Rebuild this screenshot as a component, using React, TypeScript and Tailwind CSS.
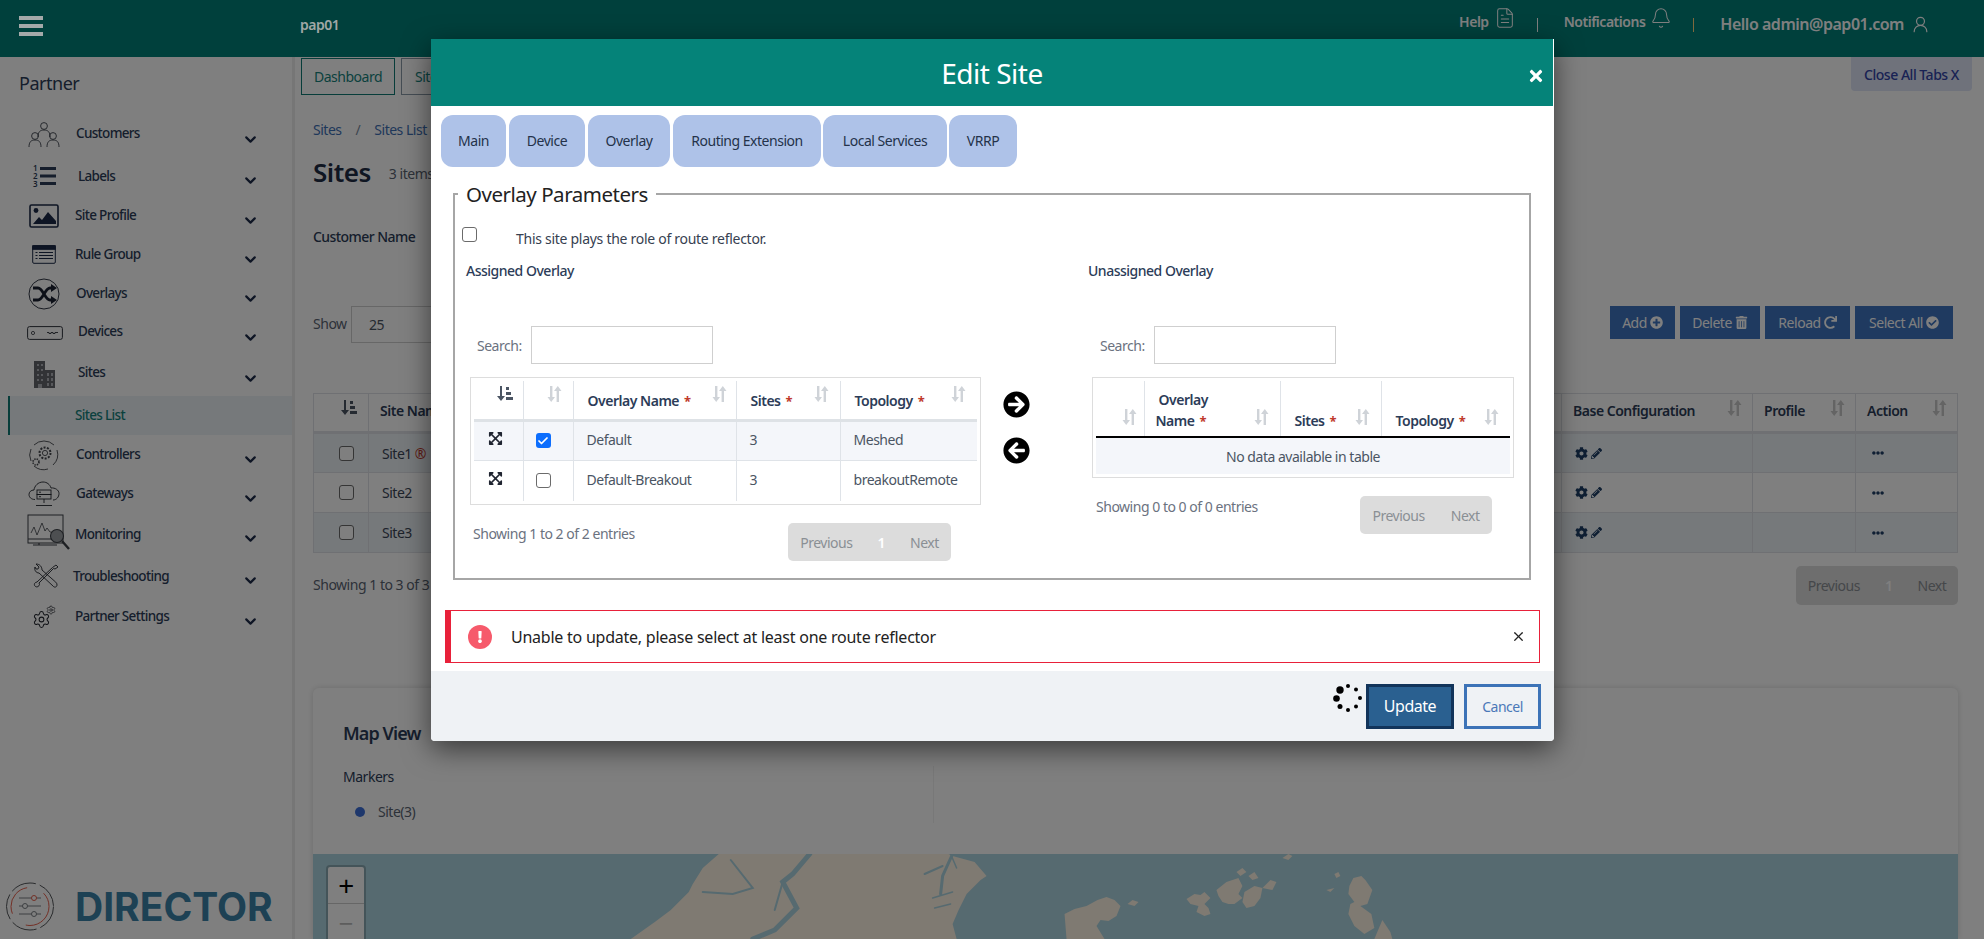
import { Bell, Check, ChevronDown, FileText, Settings, UserRound, X } from "lucide-react";
import {
  FaArrowCircleLeft,
  FaArrowCircleRight,
  FaCheckCircle,
  FaCog,
  FaEllipsisH,
  FaExclamation,
  FaExpandArrowsAlt,
  FaPencilAlt,
  FaPlusCircle,
  FaRedo,
  FaTimes,
  FaTrashAlt,
} from "react-icons/fa";

const ink = "#2c3c58";

function Customers() {
  const person = (x: number, y: number) => (
    <g key={`${x}-${y}`}>
      <circle cx={x} cy={y} r="3.4" />
      <path d={`M${x - 6} ${y + 11}c0-5 2-7 6-7s6 2 6 7`} />
    </g>
  );
  return (
    <svg width="34" height="28" viewBox="0 0 34 28" fill="none" stroke="#3a3f4a" strokeWidth="0.9">
      {person(17, 5)}
      {person(8, 15)}
      {person(26, 15)}
    </svg>
  );
}

function Labels() {
  return (
    <svg width="26" height="26" viewBox="0 0 26 26" fill={ink}>
      <text x="1" y="8" fontSize="8" fontFamily="Noto Sans" fontWeight="600">1</text>
      <text x="1" y="16" fontSize="8" fontFamily="Noto Sans" fontWeight="600">2</text>
      <text x="1" y="24" fontSize="8" fontFamily="Noto Sans" fontWeight="600">3</text>
      <rect x="8" y="4" width="16" height="3" />
      <rect x="8" y="11.5" width="16" height="3" />
      <rect x="8" y="19" width="16" height="3" />
    </svg>
  );
}

function SiteProfile() {
  return (
    <svg width="30" height="24" viewBox="0 0 30 24">
      <rect x="1" y="1" width="28" height="22" rx="1.5" fill="none" stroke="#1c2a48" strokeWidth="1.6" />
      <circle cx="7" cy="6.5" r="2.4" fill="#1c2a48" />
      <path d="M4 20l6-7 3 3 6-8 8 9v3z" fill="#1c2a48" />
    </svg>
  );
}

function RuleGroup() {
  return (
    <svg width="24" height="19" viewBox="0 0 24 19" fill="none" stroke="#1c2a48">
      <rect x="0.7" y="0.7" width="22.6" height="17.6" rx="1.2" />
      <rect x="0.7" y="0.7" width="22.6" height="3.6" fill="#1c2a48" />
      <path d="M3.5 7.5h2M7 7.5h14M3.5 10.5h2M7 10.5h14M3.5 13.5h2M7 13.5h14" />
    </svg>
  );
}

function Overlays() {
  return (
    <svg width="32" height="32" viewBox="0 0 32 32" fill="none" stroke="#1a2030">
      <circle cx="16" cy="16" r="15" strokeWidth="0.9" />
      <path d="M5 10h5c5 0 7 12 12 12h3M5 22h5c5 0 7-12 12-12h3" strokeWidth="2.8" />
      <path d="M23 6l6 4-6 4zM23 18l6 4-6 4z" fill="#1a2030" strokeWidth="0" />
    </svg>
  );
}

function Devices() {
  return (
    <svg width="36" height="14" viewBox="0 0 36 14" fill="none" stroke="#30343c">
      <rect x="0.6" y="0.6" width="34.8" height="12.8" rx="2" />
      <circle cx="6" cy="7" r="1.6" strokeWidth="0.8" />
      <path d="M20 6.5h2v1h2v-1h2v1h2v-1h3" strokeWidth="0.9" />
    </svg>
  );
}

function Sites() {
  return (
    <svg width="26" height="29" viewBox="0 0 26 29" fill="#64676c">
      <path d="M2 28V1h11v9h10v18z" />
      <g fill="#b0b3b8">
        <path d="M5 4h2v2H5zM9 4h2v2H9zM5 9h2v2H5zM9 9h2v2H9zM5 14h2v2H5zM9 14h2v2H9zM5 19h2v2H5zM9 19h2v2H9zM15 13h2v3h-2zM19 13h2v3h-2zM15 18h2v3h-2zM19 18h2v3h-2zM15 23h2v3h-2zM19 23h2v3h-2zM6 24h4v4H6z" />
      </g>
    </svg>
  );
}

function Controllers() {
  return (
    <svg width="32" height="32" viewBox="0 0 32 32" fill="none" stroke="#43464c">
      <path d="M6 6a14.5 14.5 0 0 1 20 0M29 11a14.5 14.5 0 0 1-4 15M20 30a14.5 14.5 0 0 1-14-3M3 22a14.5 14.5 0 0 1 0-12" strokeWidth="0.9" />
      <circle cx="17" cy="14" r="5.5" strokeWidth="2" strokeDasharray="2 1.4" />
      <circle cx="17" cy="14" r="2.6" strokeWidth="0.9" />
      <circle cx="8" cy="23" r="3" strokeWidth="1.6" strokeDasharray="1.4 1" />
    </svg>
  );
}

function Gateways() {
  return (
    <svg width="32" height="26" viewBox="0 0 32 26" fill="none" stroke="#22262e" strokeWidth="0.9">
      <path d="M7 18.5C3 18.5 1 16 1 13.5S3 9 6 9c.5-4 4-8 9-8 4 0 7 2.5 8 6 4-.5 8 2 8 5.5s-2.5 6.500-6 6.500" />
      <rect x="9" y="9" width="14" height="4.5" />
      <rect x="9" y="13.5" width="14" height="4.5" />
      <path d="M16 18v4M8 24.5h16M11 11.2h2M11 15.7h2" />
    </svg>
  );
}

function Monitoring() {
  return (
    <svg width="46" height="40" viewBox="0 0 46 40" fill="none" stroke="#3c4046">
      <rect x="1" y="1" width="35" height="28" strokeWidth="1" />
      <path d="M1 25h28M12 29v2M6 31h24" strokeWidth="1.2" />
      <path d="M4 19l3-6 3 8 5-12 3 8 2-3 3 4 8 1" strokeWidth="0.8" />
      <circle cx="30" cy="22" r="6.5" fill="#9a9ea3" strokeWidth="1.1" />
      <path d="M35 27l7 8" strokeWidth="2.4" />
    </svg>
  );
}

function Troubleshooting() {
  return (
    <svg width="26" height="26" viewBox="0 0 26 26" fill="none" stroke="#22262e" strokeWidth="0.9">
      <path d="M23 2l2 2-3 2-1.500-.5L6 20l.5 1.500c-.5 2-2.500 3-4 2s-1.500-3 0-4L4 19 19.500 4.500z" />
      <path d="M2 4c-1 3 1 6 4 6l14 13c1.500 2 4 1 4-1s-1-2.500-2-3.500L9 7c0-3-2-6-6-6l3 3-1 2-2 0z" />
    </svg>
  );
}

function PartnerSettings() {
  return (
    <span className="relative block h-[24px] w-[24px] text-[#22262e]">
      <Settings size={19} strokeWidth={1.3} className="absolute bottom-0 left-0" />
      <Settings size={10} strokeWidth={1.6} className="absolute top-0 right-0" />
    </span>
  );
}

const NAV = [
  { name: "Customers", Icon: Customers, row: "h-[41px]", slot: "w-[76px] pl-[12px]", lift: "-mt-[2px]" },
  { name: "Labels", Icon: Labels, row: "h-[41px]", slot: "w-[78px] pl-[12px]", lift: "mt-[2px]" },
  { name: "Site Profile", Icon: SiteProfile, row: "h-[39px]", slot: "w-[75px] pl-[12px]", lift: "" },
  { name: "Rule Group", Icon: RuleGroup, row: "h-[39px]", slot: "w-[75px] pl-[12px]", lift: "" },
  { name: "Overlays", Icon: Overlays, row: "h-[39px]", slot: "w-[76px] pl-[12px]", lift: "" },
  { name: "Devices", Icon: Devices, row: "h-[39px]", slot: "w-[78px] pl-[12px]", lift: "-mt-[2px]" },
  { name: "Sites", Icon: Sites, row: "h-[44px]", slot: "w-[78px] pl-[12px]", lift: "-mt-[4px]" },
  { name: "Controllers", Icon: Controllers, row: "h-[39px]", slot: "w-[76px] pl-[12px]", lift: "" },
  { name: "Gateways", Icon: Gateways, row: "h-[39px]", slot: "w-[76px] pl-[12px]", lift: "" },
  { name: "Monitoring", Icon: Monitoring, row: "h-[42px]", slot: "w-[75px] pl-[25px]", lift: "" },
  { name: "Troubleshooting", Icon: Troubleshooting, row: "h-[42px]", slot: "w-[73px] pl-[18px]", lift: "" },
  { name: "Partner Settings", Icon: PartnerSettings, row: "h-[39px]", slot: "w-[75px] pl-[12px]", lift: "" },
];

function Sort({ dark = false, tone = "text-[#cfd3d8]" }: { dark?: boolean; tone?: string }) {
  if (dark) {
    return (
      <svg width="16" height="16" viewBox="0 0 16 16" fill="#4b5563" className="block">
        <path d="M3 1h2v10h3l-4 5-4-5h3z" />
        <path d="M9 2h3v3H9zM9 7h5v3H9zM9 12h7v3H9z" />
      </svg>
    );
  }
  return (
    <svg width="15" height="18" viewBox="0 0 15 18" fill="currentColor" className={`block ${tone}`}>
      <path d="M3 1h2.4v11H8l-3.800 5L.5 12H3z" />
      <path d="M9.6 17V6H7l3.800-5 3.700 5H12v11z" />
    </svg>
  );
}

function Box({ checked = false }: { checked?: boolean }) {
  if (checked) {
    return (
      <span className="flex h-[15px] w-[15px] items-center justify-center rounded-[3px] bg-[#0d6efd]">
        <Check size={12} strokeWidth={3.5} className="text-white" />
      </span>
    );
  }
  return <span className="block h-[15px] w-[15px] rounded-[3px] border border-[#6b6b6b] bg-white" />;
}

function Star() {
  return <span className="ml-[5px] text-[13px] font-bold text-[#c0392b]">*</span>;
}

function Pager({ number = false, className }: { number?: boolean; className: string }) {
  return (
    <div className={`flex h-[38px] items-center rounded-[5px] bg-[#dcdcdc] text-[14px] text-[#8a8f94] ${className}`}>
      <span>Previous</span>
      {number && <span className="ml-[25px] mr-[25px] font-semibold text-white">1</span>}
      {!number && <span className="w-[26px]" />}
      <span>Next</span>
    </div>
  );
}

function MainTable() {
  const rows = [
    { name: "Site1", mark: true, tint: "bg-[#edf2f7]" },
    { name: "Site2", mark: false, tint: "bg-white" },
    { name: "Site3", mark: false, tint: "bg-[#edf2f7]" },
  ];
  const head = "relative border border-[#dee0e6] border-b-[3px] pb-[4px] pl-[11px] text-left text-[14px] font-semibold text-[#2c3c58]";
  const cell = "border border-[#dee0e6] pl-[13px] text-[14px] text-[#3b4656]";
  return (
    <table className="w-full table-fixed border-collapse">
      <colgroup>
        <col className="w-[55px]" />
        <col />
        <col className="w-[191px]" />
        <col className="w-[103px]" />
        <col className="w-[102px]" />
      </colgroup>
      <thead>
        <tr className="h-[39px]">
          <th className={head}>
            <span className="absolute left-[27px] top-[5px]"><Sort dark /></span>
          </th>
          <th className={head}>Site Name</th>
          <th className={head}>
            Base Configuration
            <span className="absolute right-[10px] top-[5px]"><Sort tone="text-[#c8c8c8]" /></span>
          </th>
          <th className={head}>
            Profile
            <span className="absolute right-[10px] top-[5px]"><Sort tone="text-[#c8c8c8]" /></span>
          </th>
          <th className={head}>
            Action
            <span className="absolute right-[10px] top-[5px]"><Sort tone="text-[#c8c8c8]" /></span>
          </th>
        </tr>
      </thead>
      <tbody>
        {rows.map((r) => (
          <tr key={r.name} className={`h-[40px] ${r.tint}`}>
            <td className={cell}>
              <span className="ml-[12px] block w-[15px]"><Box /></span>
            </td>
            <td className={cell}>
              {r.name}
              {r.mark && <span className="ml-[3px] text-[#c0392b]">®</span>}
            </td>
            <td className={cell}>
              <span className="flex items-center gap-[3px] text-[#1f3f66]">
                <FaCog size={13} />
                <FaPencilAlt size={11} />
              </span>
            </td>
            <td className={cell} />
            <td className={cell}>
              <FaEllipsisH size={12} className="ml-[3px] text-[#1f3f66]" />
            </td>
          </tr>
        ))}
      </tbody>
    </table>
  );
}

function MapShapes() {
  return (
    <svg className="absolute inset-0 h-full w-full" viewBox="0 0 1646 85" preserveAspectRatio="none">
      <path
        d="M406 0L390 14L380 30L376 38L358 56L342 68L318 85L644 85L640 70L646 56L654 40L668 26L674 22L662 8L640 2L636 0Z"
        fill="#fef4e4"
      />
      <g fill="none" stroke="#acd4e0" strokeLinecap="round">
        <path d="M497 0L480 20L470 28L484 54L462 76L440 85" strokeWidth="5" />
        <path d="M470 28L462 56" strokeWidth="2" />
        <path d="M418 6L440 34L420 40L390 38" strokeWidth="2" />
        <path d="M640 0L630 22L628 40" strokeWidth="3" />
        <path d="M612 20L630 12" strokeWidth="2" />
        <path d="M638 0L644 14" strokeWidth="1.5" />
        <path d="M640 38L620 44M638 50L622 54" strokeWidth="1.5" />
      </g>
      <g fill="#fef4e4">
        <path d="M754 85L752 60L762 55L774 52L785 46L794 43L802 46L808 52L804 62L796 67L788 66L784 72L792 85Z" />
        <path d="M815 50L820 46L826 48L822 52Z" />
        <path d="M874 45L882 40L888 41L892 38L898 44L892 50L896 54L898 60L892 62L884 58L886 52L878 50Z" />
        <path d="M904 36L914 28L920 26L926 24L930 32L926 40L930 44L922 50L916 50L910 48L906 42Z" />
        <path d="M932 38L942 32L950 34L948 44L942 52L934 54L930 48Z" />
        <path d="M950 34L958 26L964 28L960 36Z" />
        <path d="M924 18L930 14L934 18L928 22Z" />
        <path d="M936 22L942 18L946 24L940 26Z" />
        <path d="M970 4L976 0L980 2L976 6Z" />
        <path d="M1014 36L1022 34L1018 38Z" />
        <path d="M1037 32L1041 24L1049 22L1053 26L1060 36L1055 50L1048 52L1059 60L1062 74L1052 80L1042 72L1036 60L1038 50L1042 48L1036 40Z" />
        <path d="M1062 85L1070 66L1078 78L1080 85Z" />
        <path d="M1022 20L1026 18L1028 22L1024 24Z" />
      </g>
    </svg>
  );
}

function OverlayTable() {
  const head = "relative border-r border-[#dfe3e8] border-b-[3px] border-b-[#dee2e6] pl-[14px] pt-px text-left align-middle text-[14px] font-semibold text-[#2c3c58]";
  const cell = "border-r border-[#dfe3e8] pl-[13px] text-[14px] text-[#4b5563]";
  const rows = [
    { name: "Default", sites: "3", topo: "Meshed", on: true },
    { name: "Default-Breakout", sites: "3", topo: "breakoutRemote", on: false },
  ];
  return (
    <div className="border border-[#dddddd] p-[3px]">
      <table className="w-full table-fixed border-collapse">
        <colgroup>
          <col className="w-[49px]" />
          <col className="w-[50px]" />
          <col className="w-[163px]" />
          <col className="w-[104px]" />
          <col className="w-[137px]" />
        </colgroup>
        <thead>
          <tr className="h-[39px]">
            <th className={head}><span className="absolute left-[23px] top-[4px]"><Sort dark /></span></th>
            <th className={head}><span className="absolute left-[23px] top-[4px]"><Sort /></span></th>
            <th className={head}>Overlay Name<Star /><span className="absolute right-[9px] top-[4px]"><Sort /></span></th>
            <th className={head}>Sites<Star /><span className="absolute right-[11px] top-[4px]"><Sort /></span></th>
            <th className={`${head} border-r-0`}>Topology<Star /><span className="absolute right-[11px] top-[4px]"><Sort /></span></th>
          </tr>
        </thead>
        <tbody>
          {rows.map((r) => (
            <tr key={r.name} className={r.on ? "h-[40px] border-b border-[#dfe3e8] bg-[#f4f6fa]" : "h-[41px]"}>
              <td className={cell}><FaExpandArrowsAlt size={15} className="ml-[1px] -mt-[4px] text-[#1f2430]" /></td>
              <td className={cell}><span className="ml-[-1px] block w-[15px]"><Box checked={r.on} /></span></td>
              <td className={`${cell} pb-[2px]`}>{r.name}</td>
              <td className={`${cell} pb-[2px]`}>{r.sites}</td>
              <td className={`${cell} border-r-0 pb-[2px]`}>{r.topo}</td>
            </tr>
          ))}
        </tbody>
      </table>
    </div>
  );
}

function FreeTable() {
  const head = "relative border-r border-[#dfe3e8] border-b-2 border-b-black pb-[4px] text-left align-bottom text-[14px] font-semibold leading-[21px] text-[#2c3c58]";
  return (
    <div className="border border-[#dddddd] p-[3px]">
      <table className="w-full table-fixed border-collapse">
        <colgroup>
          <col className="w-[48px]" />
          <col className="w-[136px]" />
          <col className="w-[101px]" />
          <col className="w-[129px]" />
        </colgroup>
        <thead>
          <tr className="h-[56px]">
            <th className={head}><span className="absolute left-[26px] top-[27px]"><Sort /></span></th>
            <th className={`${head} pl-[11px]`}>
              <span className="block pl-[3px]">Overlay</span>
              Name<Star />
              <span className="absolute right-[11px] top-[27px]"><Sort /></span>
            </th>
            <th className={`${head} pl-[14px]`}>Sites<Star /><span className="absolute right-[11px] top-[27px]"><Sort /></span></th>
            <th className={`${head} border-r-0 pl-[14px]`}>Topology<Star /><span className="absolute right-[11px] top-[27px]"><Sort /></span></th>
          </tr>
        </thead>
        <tbody>
          <tr className="h-[37px] bg-[#f4f6fa]">
            <td colSpan={4} className="text-center text-[14px] text-[#4b5563]">No data available in table</td>
          </tr>
        </tbody>
      </table>
    </div>
  );
}

function SearchRow({ className }: { className: string }) {
  return (
    <div className={`flex h-[38px] items-center ${className}`}>
      <span className="w-[54px] text-[14px] text-[#6b7280]">Search:</span>
      <input readOnly aria-label="Search" className="h-[38px] w-[182px] border border-[#cfcfcf] bg-white" />
    </div>
  );
}

function Spinner() {
  const dots = [
    [9, 8, 3.7], [17, 4, 2], [25, 7.5, 2], [29, 16, 2], [25, 24.5, 2], [17, 28, 2], [9, 24.5, 2.5], [5.5, 16.5, 3.3],
  ];
  return (
    <svg width="34" height="32" viewBox="0 0 34 32" className="mr-px -mt-[16px]">
      {dots.map(([x, y, r]) => <circle key={`${x}-${y}`} cx={x} cy={y} r={r} fill="#000" />)}
    </svg>
  );
}

function EditSite() {
  const tabs = [
    ["Main", "w-[65px]"],
    ["Device", "ml-[3px] w-[76px]"],
    ["Overlay", "ml-[3px] w-[82px]"],
    ["Routing Extension", "ml-[3px] w-[148px]"],
    ["Local Services", "ml-[2px] w-[124px]"],
    ["VRRP", "ml-[2px] w-[68px]"],
  ];
  return (
    <div className="absolute left-[431px] top-[39px] z-20 w-[1123px] rounded-b-[4px] bg-white shadow-[0_8px_28px_rgba(0,0,0,0.55)]">
      <div className="relative mr-px flex h-[67px] items-center justify-center bg-[#058379]">
        <h1 className="text-[28px] text-white">Edit Site</h1>
        <FaTimes size={18} className="absolute right-[8px] top-[28px] text-white" />
      </div>
      <div className="ml-[10px] flex pt-[9px]">
        {tabs.map(([label, w]) => (
          <div key={label} className={`flex h-[52px] items-center justify-center rounded-[12px] bg-[#aec2e8] pb-px text-[14px] text-[#24324a] ${w}`}>
            {label}
          </div>
        ))}
      </div>
      <fieldset className="ml-[22px] mr-[23px] mt-[12px] border-2 border-[#a6a6a6] pb-[17px]">
        <legend className="ml-[3px] px-[8px] text-[20.5px] leading-[30px] text-[#222222]">Overlay Parameters</legend>
        <div className="flex pl-[7px] pt-[18px]">
          <Box />
          <span className="ml-[39px] mt-[2px] text-[14px] leading-[20px] tracking-[-0.02em] text-[#374151]">This site plays the role of route reflector.</span>
        </div>
        <div className="mt-[12px] flex">
          <div className="w-[526px] pl-[15px]">
            <h3 className="-ml-[4px] h-[20px] text-[14px] font-medium leading-[20px] tracking-[-0.035em] text-[#2c3c58]">Assigned Overlay</h3>
            <SearchRow className="ml-[7px] mt-[45px]" />
            <div className="mt-[13px]"><OverlayTable /></div>
            <div className="mt-[18px] flex items-start justify-between pl-[3px] pr-[30px]">
              <span className="text-[14px] leading-[22px] text-[#6b7280]">Showing 1 to 2 of 2 entries</span>
              <Pager number className="w-[163px] justify-center" />
            </div>
          </div>
          <div className="flex w-[70px] flex-col items-center gap-[19px] pt-[130px] text-black">
            <FaArrowCircleRight size={27} />
            <FaArrowCircleLeft size={27} />
          </div>
          <div className="w-[463px] pl-[41px]">
            <h3 className="-ml-[4px] h-[20px] text-[14px] font-medium leading-[20px] tracking-[-0.035em] text-[#2c3c58]">Unassigned Overlay</h3>
            <SearchRow className="ml-[8px] mt-[45px]" />
            <div className="mt-[13px]"><FreeTable /></div>
            <div className="mt-[18px] flex items-start justify-between pl-[4px] pr-[22px]">
              <span className="text-[14px] leading-[22px] text-[#6b7280]">Showing 0 to 0 of 0 entries</span>
              <Pager className="w-[132px] justify-center" />
            </div>
          </div>
        </div>
      </fieldset>
      <div className="mx-[14px] mt-[30px] flex h-[53px] items-center border border-l-[6px] border-[#e8213a] pl-[17px] pr-[13px]">
        <span className="flex h-[24px] w-[24px] items-center justify-center rounded-full bg-[#f65a6b] text-white">
          <FaExclamation size={12} />
        </span>
        <span className="ml-[19px] text-[16px] tracking-[-0.015em] text-[#222222]">Unable to update, please select at least one route reflector</span>
        <X size={15} className="ml-auto text-[#222222]" />
      </div>
      <div className="mt-[8px] flex h-[70px] items-center justify-end rounded-b-[4px] bg-[#eff2f5] pr-[13px]">
        <Spinner />
        <button className="h-[45px] w-[88px] border-[3px] border-[#12345a] bg-[#2a6090] text-[16px] text-white">Update</button>
        <button className="ml-[10px] h-[45px] w-[77px] border-[3px] border-[#3c73b7] text-[14px] text-[#4a78b8]">Cancel</button>
      </div>
    </div>
  );
}

export default function App() {
  const actions = [
    { label: "Add", Icon: FaPlusCircle, w: "w-[65px]" },
    { label: "Delete", Icon: FaTrashAlt, w: "w-[80px]" },
    { label: "Reload", Icon: FaRedo, w: "w-[85px]" },
    { label: "Select All", Icon: FaCheckCircle, w: "w-[98px]" },
  ];
  return (
    <div className="relative h-screen w-screen overflow-hidden bg-white font-['Noto_Sans',sans-serif] tracking-[-0.03em]">
      <header className="flex h-[57px] items-center bg-[#008079] text-white">
        <div className="relative z-[11] -mt-[5px] ml-[19px] flex w-[24px] flex-col gap-[4px]">
          <span className="h-[4px] bg-[#a4a9a9]" />
          <span className="h-[4px] bg-[#a4a9a9]" />
          <span className="h-[4px] bg-[#a4a9a9]" />
        </div>
        <span className="relative z-[11] -mt-[9px] ml-[257px] text-[14px] font-semibold text-[#a0a8a6]">pap01</span>
        <div className="ml-auto flex items-center pr-[54px]">
          <span className="-mt-[15px] text-[14px] font-semibold">Help</span>
          <FileText size={22} strokeWidth={1.1} className="-mt-[21px] ml-[5px]" />
          <span className="-mt-[7px] ml-[21px] h-[14px] w-px bg-white" />
          <span className="-mt-[15px] ml-[26px] text-[14px] font-semibold">Notifications</span>
          <Bell size={22} strokeWidth={1.1} className="-mt-[21px] ml-[5px]" />
          <span className="-mt-[7px] ml-[21px] h-[14px] w-px bg-[#ffd27a]" />
          <span className="-mt-[10px] ml-[26px] text-[16px] font-semibold">Hello admin@pap01.com</span>
          <UserRound size={19} strokeWidth={1.5} className="-mt-[8px] ml-[7px]" />
        </div>
      </header>

      <div className="flex h-[882px]">
        <aside className="flex w-[295px] shrink-0 flex-col border-r-[3px] border-[#ececec] bg-white">
          <p className="pl-[19px] pt-[14px] text-[18px] leading-[24px] text-[#2c3c58]">Partner</p>
          <nav className="mt-[19px]">
            {NAV.map((item) => (
              <div key={item.name}>
                <div className={`flex items-center pr-[33px] ${item.row}`}>
                  <span className={`flex shrink-0 justify-center ${item.slot}`}>
                    <item.Icon />
                  </span>
                  <span className={`text-[13.5px] font-medium tracking-[-0.05em] text-[#2c3c58] ${item.lift}`}>{item.name}</span>
                  <ChevronDown size={17} strokeWidth={3} className="ml-auto mt-[9px] text-[#1c2a48]" />
                </div>
                {item.name === "Sites" && (
                  <div className="ml-[8px] flex h-[39px] items-center border-l-2 border-[#0f7a75] bg-[#edf2f7] pl-[65px] text-[13.5px] font-medium tracking-[-0.05em] text-[#16837c]">
                    Sites List
                  </div>
                )}
              </div>
            ))}
          </nav>
          <div className="mt-auto flex items-center pb-[7px] pl-[5px]">
            <svg width="50" height="51" viewBox="0 0 50 51" fill="none">
              <circle cx="25" cy="25.5" r="23.5" stroke="#55585c" strokeDasharray="26 4" />
              <circle cx="25" cy="25.5" r="19" stroke="#e8604c" strokeDasharray="34 18" />
              <path d="M14 17h22M14 25h22M14 33h22" stroke="#7b7f84" />
              <circle cx="29" cy="17" r="2.5" fill="#fff" stroke="#e8604c" />
              <circle cx="20" cy="25" r="2.5" fill="#fff" stroke="#7b7f84" />
              <circle cx="29" cy="33" r="2.5" fill="#fff" stroke="#7b7f84" />
            </svg>
            <span className="ml-[20px] font-['Inter',sans-serif] text-[39px] font-bold leading-[44px] tracking-normal text-[#3a82a8]">DIRECTOR</span>
          </div>
        </aside>

        <main className="flex min-w-0 flex-1 flex-col overflow-hidden pl-[18px] pr-[26px]">
          <div className="-ml-[12px] flex items-start pt-px">
            <div className="flex h-[37px] w-[94px] items-center justify-center border border-[#0f7a75] text-[14px] text-[#16837c]">Dashboard</div>
            <div className="ml-[6px] flex h-[37px] w-[94px] items-center border border-[#8a9aa8] pl-[13px] text-[14px] text-[#16837c]">Sites List</div>
            <div className="ml-auto -mr-[14px] -mt-px flex h-[34px] w-[121px] items-center justify-center rounded-b-[4px] bg-[#dee4f6] text-[14px] font-medium text-[#3344a8]">Close All Tabs X</div>
          </div>

          <nav className="mt-[24px] flex h-[20px] items-center text-[14px] text-[#3f70b5]">
            <span>Sites</span>
            <span className="mx-[14px] text-[#7a8ba0]">/</span>
            <span>Sites List</span>
          </nav>
          <div className="mt-[13px] flex h-[40px] items-center">
            <h2 className="text-[26px] font-semibold text-[#1f2c44]">Sites</h2>
            <span className="ml-[18px] mt-[3px] text-[14px] text-[#5a6472]">3 items</span>
          </div>
          <p className="mt-[34px] h-[22px] text-[14px] font-medium leading-[22px] tracking-[-0.04em] text-[#2c3c58]">Customer Name</p>

          <div className="mt-[58px] flex items-start">
            <span className="mt-[7px] w-[38px] text-[14px] text-[#5a6472]">Show</span>
            <div className="flex h-[37px] w-[120px] items-center border border-[#cfcfcf] pl-[17px] text-[14px] text-[#4b5563]">25</div>
            <div className="ml-auto mr-[5px] flex gap-[5px]">
              {actions.map(({ label, Icon, w }) => (
                <div key={label} className={`flex h-[33px] items-center justify-center gap-[3px] bg-[#3e74c0] text-[14px] text-white ${w}`}>
                  {label}
                  <Icon size={13} />
                </div>
              ))}
            </div>
          </div>

          <div className="mt-[50px]"><MainTable /></div>

          <div className="mt-[13px] flex items-start justify-between">
            <span className="mt-[8px] text-[14px] text-[#5a6472]">Showing 1 to 3 of 3 entries</span>
            <Pager number className="h-[39px] w-[162px] justify-center" />
          </div>

          <section className="mt-[83px] flex min-h-0 flex-1 flex-col rounded-t-[6px] bg-white shadow-[0_0_6px_rgba(0,0,0,0.15)]">
            <div className="relative h-[166px] shrink-0 pl-[30px] pt-[31px]">
              <h3 className="text-[18px] font-semibold leading-[28px] tracking-[-0.05em] text-[#2c3c58]">Map View</h3>
              <p className="mt-[20px] text-[14px] leading-[20px] text-[#2c3c58]">Markers</p>
              <div className="mt-[15px] flex items-center pl-[12px] text-[14px] leading-[20px] text-[#5a6472]">
                <span className="h-[10px] w-[10px] rounded-full bg-[#3d6fd8]" />
                <span className="ml-[13px]">Site(3)</span>
              </div>
              <span className="absolute left-[620px] top-[78px] h-[57px] w-px bg-[#f0f0f0]" />
            </div>
            <div className="relative min-h-0 flex-1 overflow-hidden bg-[#acd4e0]">
              <MapShapes />
              <div className="absolute left-[13px] top-[11px] w-[40px] rounded-[4px] border-2 border-[#00000033] bg-white bg-clip-padding">
                <div className="flex h-[37px] items-center justify-center border-b border-[#cccccc] text-[28px] leading-none text-black">+</div>
                <div className="flex h-[38px] items-center justify-center text-[26px] leading-none text-[#bbbbbb]">−</div>
              </div>
            </div>
          </section>
        </main>
      </div>

      <div className="absolute inset-0 z-10 bg-black/50" />
      <EditSite />
    </div>
  );
}
